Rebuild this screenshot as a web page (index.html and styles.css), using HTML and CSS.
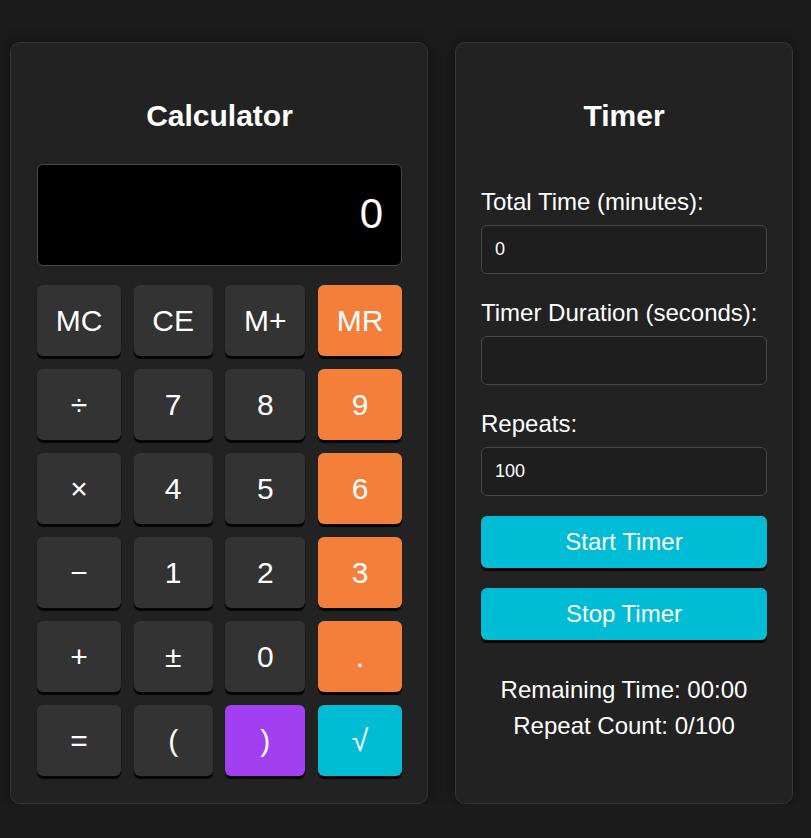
FILE: index.html
```html
<!DOCTYPE html>
<html lang="en">
<head>
<meta charset="utf-8">
<title>Calculator &amp; Timer</title>
<link rel="stylesheet" href="styles.css">
</head>
<body>
<div class="app">
  <section class="card calc">
    <h2 class="title">Calculator</h2>
    <div class="display">0</div>
    <div class="keys">
      <button class="key">MC</button>
      <button class="key">CE</button>
      <button class="key">M+</button>
      <button class="key orange">MR</button>
      <button class="key">÷</button>
      <button class="key">7</button>
      <button class="key">8</button>
      <button class="key orange">9</button>
      <button class="key">×</button>
      <button class="key">4</button>
      <button class="key">5</button>
      <button class="key orange">6</button>
      <button class="key">−</button>
      <button class="key">1</button>
      <button class="key">2</button>
      <button class="key orange">3</button>
      <button class="key">+</button>
      <button class="key">±</button>
      <button class="key">0</button>
      <button class="key orange">.</button>
      <button class="key">=</button>
      <button class="key">(</button>
      <button class="key purple">)</button>
      <button class="key cyan">√</button>
    </div>
  </section>
  <section class="card timer">
    <h2 class="title timer-title">Timer</h2>
    <label class="field-label" for="total">Total Time (minutes):</label>
    <input class="field" id="total" type="text" value="0">
    <label class="field-label" for="duration">Timer Duration (seconds):</label>
    <input class="field" id="duration" type="text" value="">
    <label class="field-label" for="repeats">Repeats:</label>
    <input class="field" id="repeats" type="text" value="100">
    <button class="action first">Start Timer</button>
    <button class="action">Stop Timer</button>
    <div class="status">
      <div>Remaining Time: 00:00</div>
      <div>Repeat Count: 0/100</div>
    </div>
  </section>
</div>
</body>
</html>
```
FILE: styles.css
```css
html, body {
  margin: 0;
  background: #1b1b1b;
}
body {
  font-family: "Liberation Sans", Arial, sans-serif;
  color: #fff;
}
.app {
  display: flex;
  align-items: stretch;
  gap: 27px;
  padding: 42px 0 0 10px;
}
.card {
  background: #222222;
  border: 1px solid #353535;
  border-radius: 10px;
  box-shadow: 0 0 14px rgba(0, 0, 0, 0.45);
  padding: 25px 25px 27px;
  display: flex;
  flex-direction: column;
}
.calc {
  width: 365px;
  padding-left: 26px;
}
.timer { width: 286px; }
.title {
  margin: 31px 0 31px;
  font-size: 30px;
  line-height: 34px;
  font-weight: bold;
  text-align: center;
}
.timer-title { margin-bottom: 55px; }
.display {
  box-sizing: border-box;
  height: 102px;
  background: #000;
  border: 1px solid #474747;
  border-radius: 6px;
  display: flex;
  align-items: center;
  justify-content: flex-end;
  padding: 0 18px 3px 0;
  font-size: 42px;
  line-height: 48px;
}
.keys {
  margin-top: 19px;
  display: grid;
  grid-template-columns: 84fr 79fr 80fr 84fr;
  grid-auto-rows: 71px;
  column-gap: 12.7px;
  row-gap: 13px;
}
.key {
  border: 0;
  border-radius: 6px;
  background: #333333;
  color: #fff;
  font-family: "Liberation Sans", Arial, sans-serif;
  font-size: 30px;
  padding: 0;
  box-shadow: 0 3px 1px rgba(0, 0, 0, 0.85);
}
.key.orange { background: #f47f3b; }
.key.purple { background: #a23ff0; }
.key.cyan { background: #00bcd4; }
.field-label {
  display: block;
  font-size: 24px;
  line-height: 28px;
}
.field {
  box-sizing: border-box;
  display: block;
  width: 100%;
  height: 49px;
  margin: 9px 0 25px;
  padding: 0 13px;
  background: #1e1e1e;
  border: 1px solid #474747;
  border-radius: 6px;
  color: #fff;
  font-family: "Liberation Sans", Arial, sans-serif;
  font-size: 18px;
  outline: none;
}
#repeats { margin-bottom: 20px; }
.action {
  display: block;
  width: 100%;
  height: 52px;
  border: 0;
  border-radius: 6px;
  background: #00bcd4;
  color: #fff;
  font-family: "Liberation Sans", Arial, sans-serif;
  font-size: 24px;
  padding: 0;
  box-shadow: 0 3px 1px rgba(0, 0, 0, 0.85);
}
.action.first { margin-bottom: 20px; }
.status {
  margin-top: 32px;
  text-align: center;
  font-size: 24px;
  line-height: 36px;
}
```
